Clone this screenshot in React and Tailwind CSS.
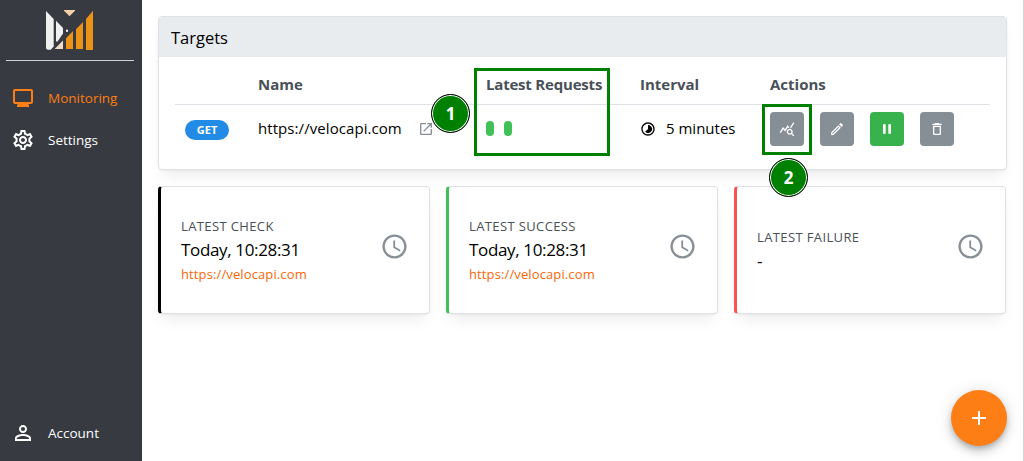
import {
  MdMonitor,
  MdOutlineSettings,
  MdPersonOutline,
  MdOpenInNew,
  MdTimelapse,
  MdQueryStats,
  MdOutlineModeEdit,
  MdPause,
  MdDeleteOutline,
  MdAccessTime,
  MdAdd,
} from 'react-icons/md';

function Logo() {
  return (
    <svg width="48" height="42" viewBox="46 9 48 42" className="block">
      <path d="M46 11l7.700 8v27.500l-3 3.200H47.500L46 48.500z" fill="#f0f0f0" />
      <path d="M56 20.700l7 7.300v5.500l-5.400 8H56z" fill="#f0f0f0" />
      <path d="M64 10h11v.8l-5.500 5.400L64 10.800z" fill="#f0d0a8" />
      <path d="M66 29.700h2v2h-2z" fill="#fff" />
      <path d="M54.600 49l8.400-8.400V49z" fill="#f3dcc4" />
      <path d="M66 38.300l7-7.300v18h-7zM76 29.300l7-7.300v27h-7zM86 19l7-8.200V50h-7z" fill="#ea9317" />
    </svg>
  );
}

function NavItem({ icon: Icon, label, className }) {
  return (
    <a className={`flex items-center gap-[13px] pl-[11px] text-[13.5px] leading-5 ${className}`}>
      <Icon size={24} />
      <span>{label}</span>
    </a>
  );
}

function Sidebar() {
  return (
    <aside className="flex h-full w-[142px] shrink-0 flex-col bg-[#373a40]">
      <div className="mr-2 ml-1.5 flex h-[61px] justify-center border-b border-[#ced4da] pt-[9px]">
        <Logo />
      </div>
      <nav className="mt-[25px] flex flex-col gap-[18px]">
        <NavItem icon={MdMonitor} label="Monitoring" className="text-[#fd7e14]" />
        <NavItem icon={MdOutlineSettings} label="Settings" className="text-white" />
      </nav>
      <NavItem icon={MdPersonOutline} label="Account" className="mt-auto mb-4 text-white" />
    </aside>
  );
}

function Action({ icon: Icon, className = 'bg-[#868e96]', children }) {
  return (
    <button className={`relative flex size-[34px] items-center justify-center rounded text-white ${className}`}>
      <Icon size={16} />
      {children}
    </button>
  );
}

function Marker({ n, className }) {
  return (
    <span
      className={`absolute z-10 flex size-[39px] items-center justify-center rounded-full border border-black bg-[#008000] text-[17px] font-bold text-white shadow-[inset_0_0_0_1px_#fff] ${className}`}
    >
      {n}
    </span>
  );
}

const columns = 'grid grid-cols-[83px_228px_154px_130px_1fr]';

function Targets() {
  return (
    <section className="h-[154px] w-[849px] rounded border border-[#dee2e6] bg-white shadow-[0_1px_3px_rgba(0,0,0,0.05),0_10px_15px_-5px_rgba(0,0,0,0.08)]">
      <h1 className="h-10 rounded-t-[3px] bg-[#e9ecef] pl-3 text-[16.5px] leading-[41px]">Targets</h1>
      <div className="mx-4">
        <div className={`${columns} h-12 border-b border-[#dee2e6] pt-[15px] text-[15px] leading-6 font-bold text-[#495057]`}>
          <span />
          <span>Name</span>
          <span className="tracking-[-0.2px]">Latest Requests</span>
          <span>Interval</span>
          <span>Actions</span>
        </div>
        <div className={`${columns} relative h-12 items-center text-[15px]`}>
          <span className="ml-2.5 mt-0.5 flex h-5 w-11 items-center justify-center rounded-full bg-[#228be6] text-[11px] font-bold text-white">
            GET
          </span>
          <span className="flex items-center">
            <span className="-mt-0.5 w-[160px] tracking-[0.07px]">https://velocapi.com</span>
            <MdOpenInNew size={16} className="text-[#868e96]" />
          </span>
          <span className="-mt-0.5 flex gap-2.5">
            <i className="h-[15px] w-2 rounded-full bg-[#40c057]" />
            <i className="h-[15px] w-2 rounded-full bg-[#40c057]" />
          </span>
          <span className="flex items-center gap-2.5">
            <MdTimelapse size={16} />
            <span className="-mt-0.5">5 minutes</span>
          </span>
          <span className="flex gap-4">
            <Action icon={MdQueryStats}>
              <span className="absolute -top-2 -left-2 h-[51px] w-[50px] border-3 border-[#008000]" />
            </Action>
            <Action icon={MdOutlineModeEdit} />
            <Action icon={MdPause} className="bg-[#37b24d]" />
            <Action icon={MdDeleteOutline} />
          </span>
          <Marker n={1} className="top-[-11px] left-[256px]" />
          <span className="absolute top-[-37px] left-[299px] h-[88px] w-[136px] border-3 border-[#008000]" />
          <Marker n={2} className="top-[53px] left-[594px]" />
        </div>
      </div>
    </section>
  );
}

function StatCard({ title, value, link, className }) {
  return (
    <section
      className={`flex h-32 w-[272px] items-center justify-between rounded border border-l-3 border-[#dee2e6] bg-white pr-5 pl-5 shadow-[0_1px_3px_rgba(0,0,0,0.05),0_10px_15px_-5px_rgba(0,0,0,0.08)] ${className}`}
    >
      <div>
        <h2 className="text-[13px] leading-[22px] tracking-[0.38px] text-[#495057]">{title}</h2>
        <p className="text-[17px] leading-[26px] tracking-[-0.35px]">{value}</p>
        {link && <a className="block text-[13px] leading-[22px] tracking-[0.12px] text-[#f76707]">{link}</a>}
      </div>
      <MdAccessTime size={29} className="mb-[7px] text-[#868e96]" />
    </section>
  );
}

export default function App() {
  return (
    <div className="flex h-[461px] w-[1024px] overflow-hidden bg-white font-['Open_Sans','Noto_Sans',sans-serif] text-black">
      <Sidebar />
      <main className="relative flex flex-1 flex-col gap-4 border-r border-[#ced4da] pt-4 pl-4">
        <Targets />
        <div className="flex gap-4">
          <StatCard title="LATEST CHECK" value="Today, 10:28:31" link="https://velocapi.com" className="border-l-black" />
          <StatCard title="LATEST SUCCESS" value="Today, 10:28:31" link="https://velocapi.com" className="border-l-[#40c057]" />
          <StatCard title="LATEST FAILURE" value="-" className="border-l-[#fa5252]" />
        </div>
        <button className="absolute right-4 bottom-[15px] flex size-14 items-center justify-center rounded-full bg-[#fd7e14] text-white shadow-[0_3px_5px_-1px_rgba(0,0,0,0.2),0_6px_10px_rgba(0,0,0,0.14),0_1px_18px_rgba(0,0,0,0.12)]">
          <MdAdd size={24} />
        </button>
      </main>
    </div>
  );
}
